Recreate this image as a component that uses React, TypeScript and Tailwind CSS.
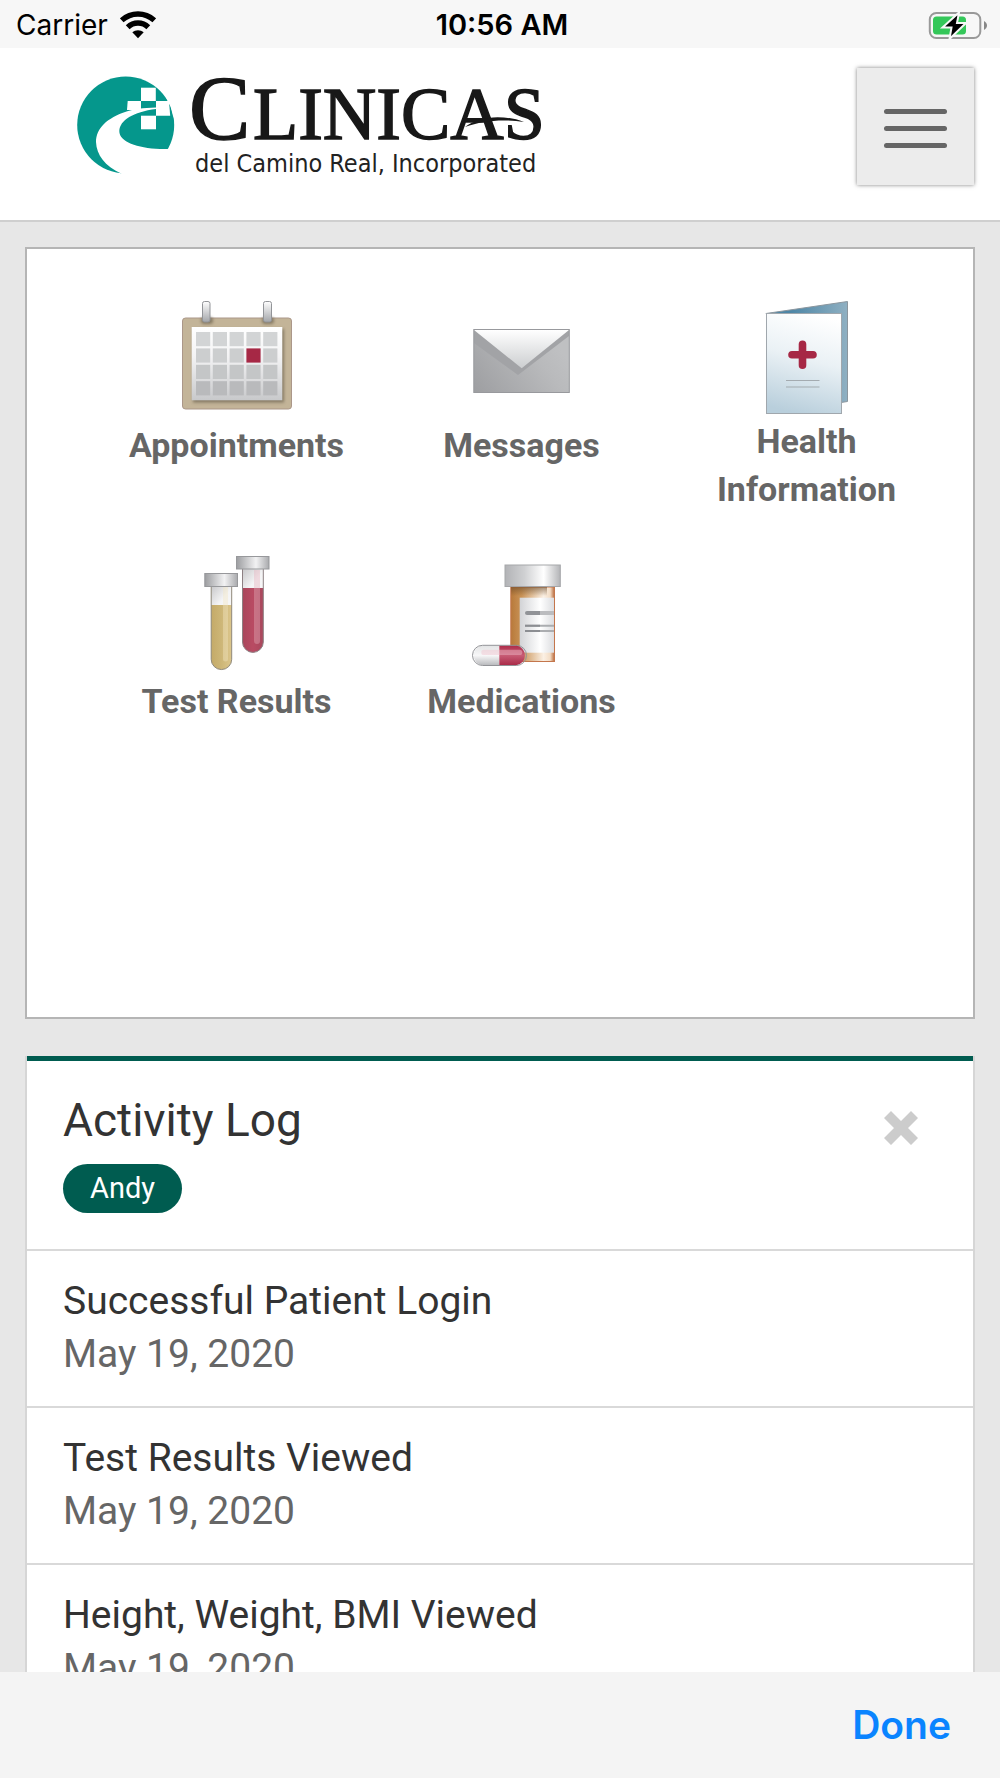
import { useState } from "react"
import type { ReactNode } from "react"

interface Tile {
  label: string
  icon: ReactNode
}

interface LogEntry {
  title: string
  date: string
}

function WifiIcon() {
  return (
    <svg viewBox="0 0 36 28" className="h-7 w-9" aria-hidden="true">
      <g fill="none" stroke="#000" strokeWidth="5.500">
        <path d="M1.700 9.300C11 .9 25 .9 34.300 9.300" />
        <path d="M7.700 16.200C13.500 10.700 22.500 10.700 28.300 16.200" />
      </g>
      <path d="M12.300 21.300C15.500 18.400 20.500 18.400 23.700 21.300L18 27.200Z" />
    </svg>
  )
}

function BatteryIcon() {
  return (
    <svg viewBox="0 0 60 28" className="h-7 w-[60px]" aria-hidden="true">
      <rect x="1.800" y="2" width="50.500" height="25" rx="6.500" fill="none" stroke="#999" strokeWidth="2" />
      <rect x="5" y="5.500" width="33" height="18" rx="3.500" fill="#34c759" />
      <path d="M56 10C60 12 60 17 56 19Z" fill="#888" />
      <path d="M31 1.500L14.500 16.500H23.500L21.500 28L38 12H29Z" fill="#000" stroke="#f7f7f7" strokeWidth="2" />
    </svg>
  )
}

function Logo() {
  return (
    <svg viewBox="0 -20 470 140" className="w-[470px] max-w-full" role="img" aria-label="Clinicas del Camino Real, Incorporated">
      <circle cx="48.700" cy="49" r="48.500" fill="#05978c" />
      <g fill="#fff">
        <path d="M79 31.500C66 31.800 56 33.500 49.500 35.500C30 42 19.200 52 19 66C19.500 79 28 90 44 97.600L60 112H112V73H90.700L83 73C60 72 42.300 66 42.300 55C43 44 56 36 79 33Z" />
        <path d="M64 11.700H78.800V25H64Z" />
        <path d="M50.700 25H64V34H50Z" />
        <path d="M79 25H92L93.200 39.700H79Z" />
        <path d="M64 39.700H79V53.300H64Z" />
        <path d="M88.500 20.500L100 28V48L96 40L93.500 30Z" />
      </g>
      <g fill="#181818" stroke="#181818" fontFamily="'Liberation Serif', serif">
        <text x="112" y="63" fontSize="92" strokeWidth="1.500">C</text>
        <text x="176" y="63" fontSize="74" strokeWidth="1.500">LINICAS</text>
        <path d="M388 51C402 40 426 38 447 46C428 43 406 44 388 51Z" stroke="none" />
      </g>
      <text x="118" y="96" fontSize="25" fill="#222" fontFamily="'DejaVu Sans Condensed', 'Liberation Sans', sans-serif">
        del Camino Real, Incorporated
      </text>
    </svg>
  )
}

function AppointmentsIcon() {
  return (
    <svg viewBox="1 0 120 120" className="size-[120px]" aria-hidden="true">
      <defs>
        <linearGradient id="sheet" x1="0" y1="0" x2="0" y2="1">
          <stop offset="0" stopColor="#fff" />
          <stop offset=".4" stopColor="#f3f3f4" />
          <stop offset="1" stopColor="#c8c9cb" />
        </linearGradient>
        <linearGradient id="ring" x1="0" y1="0" x2="0" y2="1">
          <stop offset="0" stopColor="#fff" />
          <stop offset="1" stopColor="#a3a5a9" />
        </linearGradient>
        <filter id="soft" x="-20%" y="-20%" width="140%" height="140%">
          <feGaussianBlur stdDeviation="1.500" />
        </filter>
      </defs>
      <rect x="6.500" y="21" width="109" height="91" rx="3" fill="#c3b498" stroke="#ab9789" />
      <g fill="#5d5340" opacity=".6" filter="url(#soft)">
        <rect x="17" y="32" width="91" height="73.500" />
        <rect x="25" y="20" width="12" height="7" rx="3" />
        <rect x="86" y="20" width="12" height="7" rx="3" />
      </g>
      <rect x="15.700" y="30" width="90.600" height="73.300" fill="url(#sheet)" />
      {[0, 1, 2, 3].map((row) =>
        [0, 1, 2, 3, 4].map((col) => (
          <rect
            key={`${row}-${col}`}
            x={20 + col * 16.8}
            y={35 + row * 16.4}
            width="14.200"
            height="14.200"
            fill={row === 1 && col === 3 ? "#a62845" : ["#d2d4d5", "#cccecf", "#c4c6c7", "#b9babc"][row]}
          />
        ))
      )}
      <rect x="26.500" y="4.500" width="7.500" height="20.500" rx="2" fill="url(#ring)" stroke="#929498" />
      <rect x="87.500" y="4.500" width="8" height="20.500" rx="2" fill="url(#ring)" stroke="#929498" />
    </svg>
  )
}

function MessagesIcon() {
  return (
    <svg viewBox="1 0 120 120" className="size-[120px]" aria-hidden="true">
      <defs>
        <linearGradient id="envelope" x1="0" y1="1" x2="1" y2=".5">
          <stop offset="0" stopColor="#9d9ea1" />
          <stop offset=".75" stopColor="#b9babc" />
          <stop offset="1" stopColor="#bfc0c2" />
        </linearGradient>
        <linearGradient id="flap" x1="0" y1="0" x2="0" y2="1">
          <stop offset="0" stopColor="#fff" />
          <stop offset="1" stopColor="#ccced0" />
        </linearGradient>
      </defs>
      <rect x="12.800" y="32.500" width="95.500" height="63" fill="url(#envelope)" />
      <path d="M13 33V46L57 78L108 39V33Z" fill="#a2a3a6" />
      <path d="M13 33H108L60.700 71.300Z" fill="url(#flap)" />
      <rect x="12.800" y="32.500" width="95.500" height="63" fill="none" stroke="#98999d" />
    </svg>
  )
}

function HealthIcon() {
  return (
    <svg viewBox="1 0 120 120" className="size-[120px]" aria-hidden="true">
      <defs>
        <linearGradient id="cover" x1=".6" y1="0" x2=".4" y2="1">
          <stop offset="0" stopColor="#fff" />
          <stop offset=".45" stopColor="#eaf1f5" />
          <stop offset="1" stopColor="#b9cfdc" />
        </linearGradient>
        <linearGradient id="back" x1="0" y1="0" x2="1" y2="0">
          <stop offset=".3" stopColor="#4d86a6" />
          <stop offset="1" stopColor="#8fb0c2" />
        </linearGradient>
      </defs>
      <path d="M20 16.500L101.500 4.500V104.500L95 105.500Z" fill="url(#back)" stroke="#8b969e" />
      <rect x="20.500" y="16.500" width="75" height="100" fill="url(#cover)" stroke="#a0a7ad" />
      <path d="M56.500 47.300V68.300M46 57.700H67" stroke="#a62845" strokeWidth="7.600" strokeLinecap="round" />
      <path d="M40 83.500H73.500M40 90H73.500" stroke="#a4abb0" strokeWidth="1.200" />
    </svg>
  )
}

function TestResultsIcon() {
  return (
    <svg viewBox="1 0 120 120" className="size-[120px]" aria-hidden="true">
      <defs>
        <linearGradient id="stopper" x1="0" y1="0" x2="1" y2="0">
          <stop offset="0" stopColor="#9c9da0" />
          <stop offset=".6" stopColor="#f2f2f3" />
          <stop offset="1" stopColor="#a9aaad" />
        </linearGradient>
        <linearGradient id="glass" x1="0" y1="0" x2=".3" y2="1">
          <stop offset="0" stopColor="#c8c8ca" />
          <stop offset=".3" stopColor="#f4f4f5" />
          <stop offset="1" stopColor="#fff" />
        </linearGradient>
        <linearGradient id="amber" x1="0" y1="0" x2="1" y2="0">
          <stop offset="0" stopColor="#c4aa68" />
          <stop offset=".5" stopColor="#cdb677" />
          <stop offset="1" stopColor="#dcc68c" />
        </linearGradient>
        <linearGradient id="blood" x1="0" y1="0" x2="1" y2="0">
          <stop offset="0" stopColor="#a8475b" />
          <stop offset=".5" stopColor="#b94b63" />
          <stop offset="1" stopColor="#a8485d" />
        </linearGradient>
      </defs>
      <path d="M66.500 16H87.300V89A10.400 10.400 0 0 1 66.500 89Z" fill="url(#glass)" />
      <path d="M66.500 35H87.300V89A10.400 10.400 0 0 1 66.500 89Z" fill="url(#blood)" />
      <path d="M78 17H84V88A3 3 0 0 1 78 88Z" fill="#e6aebb" opacity=".4" />
      <path d="M66.500 16V89A10.400 10.400 0 0 0 87.300 89V16" fill="none" stroke="#8d8083" />
      <rect x="60.500" y="3.500" width="32.500" height="12.500" fill="url(#stopper)" stroke="#97989b" />

      <path d="M35.200 33H55.700V106.300A10.250 10.250 0 0 1 35.200 106.300Z" fill="url(#glass)" />
      <path d="M35.200 52H55.700V106.300A10.250 10.250 0 0 1 35.200 106.300Z" fill="url(#amber)" />
      <path d="M47 34H52V106A2.500 2.500 0 0 1 47 106Z" fill="#f2e6c4" opacity=".4" />
      <path d="M35.200 33V106.300A10.250 10.250 0 0 0 55.700 106.300V33" fill="none" stroke="#8f887a" />
      <rect x="28.800" y="20.500" width="32.700" height="13" fill="url(#stopper)" stroke="#97989b" />
    </svg>
  )
}

function MedicationsIcon() {
  return (
    <svg viewBox="1 0 120 120" className="size-[120px]" aria-hidden="true">
      <defs>
        <linearGradient id="lid" x1="0" y1="0" x2="1" y2="0">
          <stop offset="0" stopColor="#b2b3b6" />
          <stop offset=".35" stopColor="#cfd0d2" />
          <stop offset=".7" stopColor="#fff" />
          <stop offset="1" stopColor="#b3b4b7" />
        </linearGradient>
        <linearGradient id="bottle" x1="0" y1="0" x2="1" y2="0">
          <stop offset="0" stopColor="#b8793a" />
          <stop offset=".25" stopColor="#c99357" />
          <stop offset=".75" stopColor="#fbf0e4" />
          <stop offset=".9" stopColor="#f3ddc6" />
          <stop offset="1" stopColor="#b86a3c" />
        </linearGradient>
        <linearGradient id="sticker" x1="0" y1="0" x2="1" y2="0">
          <stop offset="0" stopColor="#d2d3d6" />
          <stop offset=".6" stopColor="#fff" />
          <stop offset="1" stopColor="#dcdde0" />
        </linearGradient>
        <linearGradient id="shade" x1="0" y1="0" x2="0" y2="1">
          <stop offset="0" stopColor="#6b4a28" stopOpacity=".6" />
          <stop offset="1" stopColor="#6b4a28" stopOpacity="0" />
        </linearGradient>
        <linearGradient id="pillWhite" x1="0" y1="0" x2="0" y2="1">
          <stop offset="0" stopColor="#e3e4e5" />
          <stop offset=".5" stopColor="#f7f7f8" />
          <stop offset="1" stopColor="#b9babd" />
        </linearGradient>
        <linearGradient id="pillRed" x1="0" y1="0" x2="0" y2="1">
          <stop offset="0" stopColor="#ae2c4a" />
          <stop offset=".5" stopColor="#c75c75" />
          <stop offset="1" stopColor="#a92a48" />
        </linearGradient>
      </defs>
      <rect x="49.800" y="34" width="43.700" height="74.500" fill="url(#bottle)" stroke="#c4764c" />
      <rect x="50" y="34" width="36" height="9" fill="url(#shade)" />
      <rect x="58.700" y="44.700" width="34.300" height="55" fill="url(#sticker)" />
      <path d="M66 60H79" stroke="#919397" strokeWidth="4" strokeLinecap="round" />
      <path d="M79 60H93" stroke="#bbbcbf" strokeWidth="4" />
      <path d="M64 72.700H93M64 78H93" stroke="#abadb0" strokeWidth="2" />
      <path d="M64 72.700H79M64 78H79" stroke="#8c8e92" strokeWidth="2" />
      <rect x="44" y="12" width="55.300" height="21.500" fill="url(#lid)" stroke="#a6a7aa" />
      <path d="M38.300 92.500H21.300A10 10 0 0 0 21.300 112.300H38.300Z" fill="url(#pillWhite)" />
      <path d="M38.300 92.500H55.300A10 10 0 0 1 55.300 112.300H38.300Z" fill="url(#pillRed)" />
      <rect x="11.500" y="92.300" width="54" height="20.200" rx="10.100" fill="none" stroke="#929397" />
      <rect x="20.300" y="96.700" width="41" height="5.300" rx="2.600" fill="#f2c3cf" opacity=".45" />
    </svg>
  )
}

const tiles: Tile[] = [
  { label: "Appointments", icon: <AppointmentsIcon /> },
  { label: "Messages", icon: <MessagesIcon /> },
  { label: "Health Information", icon: <HealthIcon /> },
  { label: "Test Results", icon: <TestResultsIcon /> },
  { label: "Medications", icon: <MedicationsIcon /> },
]

const entries: LogEntry[] = [
  { title: "Successful Patient Login", date: "May 19, 2020" },
  { title: "Test Results Viewed", date: "May 19, 2020" },
  { title: "Height, Weight, BMI Viewed", date: "May 19, 2020" },
]

export default function App() {
  const [showLog, setShowLog] = useState(true)

  return (
    <div className="flex h-screen flex-col overflow-hidden bg-[#e7e7e7] font-[Roboto,sans-serif]">
      {/* Status bar */}
      <div className="grid h-12 shrink-0 grid-cols-3 items-center bg-[#f7f7f7] pt-px pr-3 pl-4 font-[Inter,sans-serif] text-[28px] leading-9 text-black">
        <div className="flex items-center gap-3">
          <span>Carrier</span>
          <WifiIcon />
        </div>
        <span className="text-center text-[29px] font-semibold">10:56 AM</span>
        <div className="flex justify-end">
          <BatteryIcon />
        </div>
      </div>

      {/* Header */}
      <header className="flex h-[174px] shrink-0 items-start justify-between border-b-2 border-[#cfcfcf] bg-white pt-2 pr-[26px] pl-[77px]">
        <a href="#home" className="block min-w-0">
          <Logo />
        </a>
        <button
          type="button"
          aria-label="Menu"
          className="mt-3 flex size-[117px] shrink-0 flex-col items-center justify-center gap-3 bg-[#ececec] pt-1 shadow-[0_0_4px_rgba(0,0,0,0.5)]"
        >
          <span className="h-[5px] w-[63px] rounded-full bg-[#666]" />
          <span className="h-[5px] w-[63px] rounded-full bg-[#666]" />
          <span className="h-[5px] w-[63px] rounded-full bg-[#666]" />
        </button>
      </header>

      <main className="min-h-0 flex-1 overflow-hidden px-[25px] pt-[25px]">
        {/* Shortcuts */}
        <nav className="grid min-h-[772px] auto-rows-[256px] grid-cols-3 border-2 border-[#b5b5b5] bg-white pt-12 pr-6 pl-[67px]">
          {tiles.map((tile) => (
            <a key={tile.label} href="#" className="flex flex-col items-center">
              {tile.icon}
              <span className="flex min-h-14 max-w-[220px] items-center text-center text-[34px] leading-[48px] font-bold text-[#666]">
                {tile.label}
              </span>
            </a>
          ))}
        </nav>

        {/* Activity log */}
        {showLog && (
          <section className="mt-[37px] border-x-2 border-[#d6d6d6] bg-white">
            <div className="h-[5px] bg-[#005c50]" />
            <div className="flex items-start justify-between border-b-2 border-[#d9d9d9] pt-8 pr-[54px] pb-9 pl-9">
              <div>
                <h2 className="text-[46px] leading-[54px] text-[#333]">Activity Log</h2>
                <span className="mt-[17px] inline-block rounded-full bg-[#005c50] px-[27px] text-[29px] leading-[49px] text-white">
                  Andy
                </span>
              </div>
              <button type="button" aria-label="Close" onClick={() => setShowLog(false)} className="mt-[17px]">
                <svg viewBox="0 0 36 36" className="size-9" fill="#ccc" aria-hidden="true">
                  <path d="M8 1L18 11L28 1L35 8L25 18L35 28L28 35L18 25L8 35L1 28L11 18L1 8Z" />
                </svg>
              </button>
            </div>
            <ul>
              {entries.map((entry) => (
                <li key={entry.title} className="border-b-2 border-[#d9d9d9] px-9 pt-6 pb-[25px] text-[39px] leading-[53px]">
                  <p className="text-[#333]">{entry.title}</p>
                  <p className="text-[#666]">{entry.date}</p>
                </li>
              ))}
            </ul>
          </section>
        )}
      </main>

      {/* Toolbar */}
      <footer className="flex h-[106px] shrink-0 items-center justify-end bg-[#f4f4f4] px-[49px] font-[Inter,sans-serif]">
        <button type="button" className="text-[39px] leading-[48px] font-semibold text-[#0a84ff]">
          Done
        </button>
      </footer>
    </div>
  )
}
